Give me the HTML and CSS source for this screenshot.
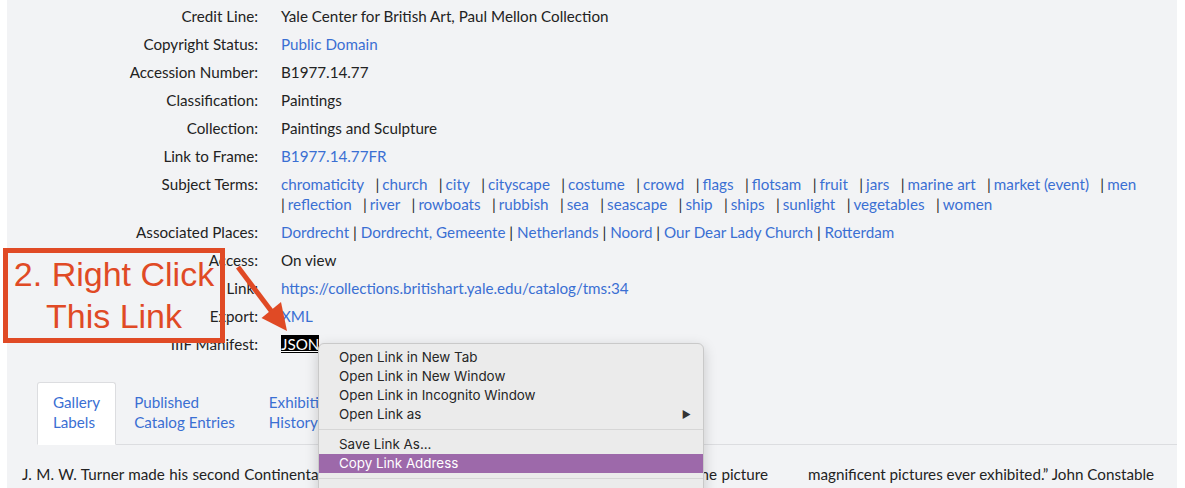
FILE: index.html
```html
<!DOCTYPE html>
<html>
<head>
<meta charset="utf-8">
<link rel="stylesheet" href="styles.css">
</head>
<body>
<div class="page">
  <dl class="details">
    <dt>Credit Line:</dt><dd>Yale Center for British Art, Paul Mellon Collection</dd>
    <dt>Copyright Status:</dt><dd><a href="#">Public Domain</a></dd>
    <dt>Accession Number:</dt><dd>B1977.14.77</dd>
    <dt>Classification:</dt><dd>Paintings</dd>
    <dt>Collection:</dt><dd>Paintings and Sculpture</dd>
    <dt>Link to Frame:</dt><dd><a href="#">B1977.14.77FR</a></dd>
    <dt>Subject Terms:</dt>
    <dd class="terms">
      <span class="term"><a href="#">chromaticity</a></span>
      <span class="term"><a href="#">church</a></span>
      <span class="term"><a href="#">city</a></span>
      <span class="term"><a href="#">cityscape</a></span>
      <span class="term"><a href="#">costume</a></span>
      <span class="term"><a href="#">crowd</a></span>
      <span class="term"><a href="#">flags</a></span>
      <span class="term"><a href="#">flotsam</a></span>
      <span class="term"><a href="#">fruit</a></span>
      <span class="term"><a href="#">jars</a></span>
      <span class="term"><a href="#">marine art</a></span>
      <span class="term"><a href="#">market (event)</a></span>
      <span class="term"><a href="#">men</a></span>
      <span class="term"><a href="#">reflection</a></span>
      <span class="term"><a href="#">river</a></span>
      <span class="term"><a href="#">rowboats</a></span>
      <span class="term"><a href="#">rubbish</a></span>
      <span class="term"><a href="#">sea</a></span>
      <span class="term"><a href="#">seascape</a></span>
      <span class="term"><a href="#">ship</a></span>
      <span class="term"><a href="#">ships</a></span>
      <span class="term"><a href="#">sunlight</a></span>
      <span class="term"><a href="#">vegetables</a></span>
      <span class="term"><a href="#">women</a></span>
    </dd>
    <dt>Associated Places:</dt>
    <dd><a href="#">Dordrecht</a> | <a href="#">Dordrecht, Gemeente</a> | <a href="#">Netherlands</a> | <a href="#">Noord</a> | <a href="#">Our Dear Lady Church</a> | <a href="#">Rotterdam</a></dd>
    <dt>Access:</dt><dd>On view</dd>
    <dt>Link:</dt><dd><a href="#">https://collections.britishart.yale.edu/catalog/tms:34</a></dd>
    <dt>Export:</dt><dd><a href="#">XML</a></dd>
    <dt>IIIF Manifest:</dt><dd><a href="#" class="selected">JSON</a></dd>
  </dl>

  <div class="tabs">
    <a href="#" class="tab active">Gallery<br>Labels</a>
    <a href="#" class="tab">Published<br>Catalog Entries</a>
    <a href="#" class="tab">Exhibition<br>History</a>
  </div>

  <div class="label-text">
    <p class="col col1">J. M. W. Turner made his second Continental tour in 1817 and sketched at Dordrecht, the setting of the picture which Constable called one of the most</p>
    <p class="col col2">magnificent pictures ever exhibited.” John Constable</p>
  </div>

  <div class="menu">
    <div class="item">Open Link in New Tab</div>
    <div class="item">Open Link in New Window</div>
    <div class="item">Open Link in Incognito Window</div>
    <div class="item sub">Open Link as <span class="caret">▶</span></div>
    <div class="sep"></div>
    <div class="item">Save Link As...</div>
    <div class="item hl">Copy Link Address</div>
    <div class="sep"></div>
    <div class="item">Copy</div>
  </div>
</div>

<div class="callout">2. Right Click<br>This Link</div>
<svg class="arrow" width="60" height="80" viewBox="230 258 60 80">
  <line x1="238" y1="267" x2="272" y2="312" stroke="#e04a25" stroke-width="5"/>
  <polygon points="287,331 261.5,318 281,302" fill="#e04a25"/>
</svg>
</body>
</html>
```

FILE: styles.css
```css
html, body {
  margin: 0;
  padding: 0;
  background: #ffffff;
  overflow: hidden;
}
body {
  position: relative;
  font-family: Lato, "Open Sans", sans-serif;
  font-size: 15.2px;
  color: #222;
}
.page {
  position: relative;
  margin: 0 8px 0 7px;
  height: 488px;
  background: #f2f3f5;
  overflow: hidden;
}
a {
  color: #3a6fd3;
  text-decoration: none;
}
.details {
  margin: 0;
  padding-top: 6px;
  display: grid;
  grid-template-columns: 251px 1fr;
  column-gap: 23px;
  row-gap: 8px;
  line-height: 20px;
}
.details dt {
  text-align: right;
}
.details dd {
  margin: 0;
}
.term {
  margin-right: 7.5px;
}
.term + .term::before {
  content: "|";
  color: #2a2a2a;
  margin-right: 3px;
}
.selected {
  background: #000;
  color: #fff;
  text-decoration: underline;
}
.tabs {
  margin: 28px 0 0 30px;
  display: flex;
  gap: 2px;
  border-bottom: 1px solid #dcdde0;
  line-height: 20px;
}
.tab {
  padding: 9px 15px 12px;
  border: 1px solid transparent;
  border-radius: 3px 3px 0 0;
  margin-bottom: -1px;
}
.tab.active {
  background: #fff;
  border-color: #dcdde0;
  border-bottom-color: #fff;
}
.label-text {
  display: flex;
  gap: 40px;
  padding: 19px 0 0 15px;
}
.col {
  margin: 0;
  line-height: 20px;
}
.col1 { width: 746px; flex: none; text-align: justify; }
.col2 { width: 362px; flex: none; }

.callout {
  position: absolute;
  left: 3px;
  top: 248px;
  width: 212px;
  height: 85px;
  border: 5px solid #e04a25;
  color: #e04a25;
  font-family: "Liberation Sans", Arial, sans-serif;
  font-size: 34px;
  line-height: 42px;
  text-align: center;
}
.arrow {
  position: absolute;
  left: 230px;
  top: 258px;
}
.menu {
  position: absolute;
  left: 311px;
  top: 343px;
  width: 386px;
  height: 160px;
  padding-top: 4px;
  box-sizing: border-box;
  background: #ebebeb;
  border: 1px solid #c9c9c9;
  border-radius: 6px;
  box-shadow: 0 4px 14px rgba(0,0,0,0.18);
  font-family: Inter, "Liberation Sans", sans-serif;
  font-size: 13.4px;
  color: #262626;
}
.item {
  height: 19px;
  line-height: 19px;
  padding-left: 20px;
  position: relative;
}
.item.hl {
  background: #9d69aa;
  color: #fff;
}
.caret {
  position: absolute;
  right: 12px;
  top: 0;
  font-size: 10px;
  color: #333;
}
.sep {
  height: 1px;
  background: #d6d6d6;
  margin: 5px 0;
}
```
